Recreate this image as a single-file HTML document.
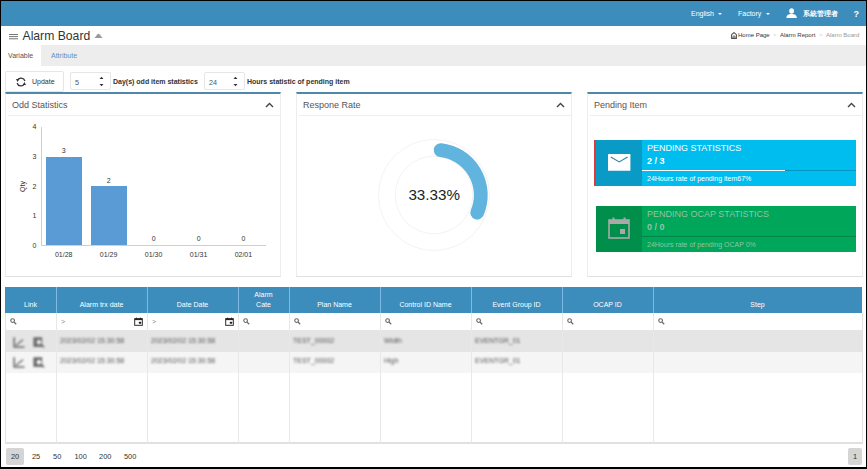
<!DOCTYPE html>
<html><head><meta charset="utf-8">
<style>
*{box-sizing:border-box;margin:0;padding:0}
html,body{width:867px;height:469px;overflow:hidden;background:#fff}
body{font-family:"Liberation Sans",sans-serif;color:#333;position:relative}
.a{position:absolute;white-space:nowrap}
.bk{position:absolute;background:#000;z-index:50}
.nav{color:#fff;font-size:7px;line-height:9px}
.caret{position:absolute;width:0;height:0;border-left:2px solid transparent;border-right:2px solid transparent;border-top:2px solid #fff}
.panel{position:absolute;top:92px;width:276px;height:185px;border:1px solid #ededed;border-bottom-color:#e0e0e0;border-top:2px solid #4f88ab;background:#fff}
.ptitle{position:absolute;left:6px;top:5.8px;font-size:9px;color:#555;line-height:11px}
.psep{position:absolute;left:2px;top:21px;width:272px;height:1px;background:#efefef}
.chev{position:absolute;top:8px;right:6px}
.inp{position:absolute;border:1px solid #e6e6e6;border-radius:2px;background:#fff}
.bold7{font-size:7px;font-weight:bold;color:#333;line-height:9px}
.lbl{font-size:7px;line-height:9px;color:#333}
.th{text-align:center;color:#fff;font-size:7px;line-height:9.5px}
.td{font-size:7px;line-height:9px;color:#555;filter:blur(0.8px)}
.blur{filter:blur(0.8px)}
</style></head><body>
<div class="a" style="left:0;top:0;width:867px;height:26px;background:#3c8dbc"></div>
<div class="a nav" style="left:691px;top:9px">English</div>
<div class="caret" style="left:717.5px;top:12.8px"></div>
<div class="a nav" style="left:738px;top:9px">Factory</div>
<div class="caret" style="left:765.5px;top:12.8px"></div>
<svg class="a" style="left:786px;top:8px" width="11" height="11" viewBox="0 0 11 11"><ellipse cx="5.6" cy="2.9" rx="2.4" ry="2.75" fill="#fff"/><path d="M0.4 10.1 C0.4 6.9 2.6 6 5.6 6 C8.6 6 10.8 6.9 10.8 10.1Z" fill="#fff"/></svg>
<div class="a nav" style="left:803px;top:9px;font-size:6.7px;font-weight:bold">系統管理者</div>
<div class="a nav" style="left:853.5px;top:8.5px;font-weight:bold;font-size:9px;line-height:10px">?</div>
<svg class="a" style="left:9px;top:33px" width="9" height="7" viewBox="0 0 9 7"><rect x="0" y="1" width="9" height="1" fill="#777"/><rect x="0" y="3.1" width="9" height="1" fill="#777"/><rect x="0" y="5.3" width="9" height="1" fill="#777"/></svg>
<div class="a" style="left:22.5px;top:28.7px;font-size:12.2px;line-height:14px;color:#333">Alarm Board</div>
<svg class="a" style="left:94px;top:33px" width="9" height="6" viewBox="0 0 9 6"><path d="M0.5 5 L3.6 1.2 Q4.5 0.2 5.4 1.2 L8.5 5 Z" fill="#999"/></svg>
<svg class="a" style="left:730.5px;top:32px" width="6" height="7" viewBox="0 0 6 7"><path d="M0.6 2.7 L3 0.6 L5.4 2.7 V6.4 H0.6 Z" fill="none" stroke="#555" stroke-width="1.1"/><path d="M2.1 6.4 V4.7 A0.9 0.9 0 0 1 3.9 4.7 V6.4" fill="none" stroke="#555" stroke-width="0.9"/></svg>
<div class="a" style="left:738px;font-size:6px;line-height:8px;top:31.2px;color:#333">Home Page</div>
<div class="a" style="left:773px;font-size:6px;line-height:8px;top:31.2px;color:#ccc">&gt;</div>
<div class="a" style="left:780px;font-size:6px;line-height:8px;top:31.2px;color:#333">Alarm Report</div>
<div class="a" style="left:819px;font-size:6px;line-height:8px;top:31.2px;color:#ccc">&gt;</div>
<div class="a" style="left:826px;font-size:6px;line-height:8px;top:31.2px;color:#999">Alarm Board</div>
<div class="a" style="left:0;top:45px;width:867px;height:21px;background:#ededed"></div>
<div class="a" style="left:1px;top:45px;width:40px;height:21px;background:#fff"></div>
<div class="a" style="left:8px;top:51px;font-size:7px;line-height:9px;color:#555">Variable</div>
<div class="a" style="left:51px;top:51px;font-size:7px;line-height:9px;color:#5a8fc6">Attribute</div>
<div class="inp" style="left:5px;top:71px;width:59px;height:21px"></div>
<svg class="a" style="left:15.5px;top:76.5px" width="10" height="10" viewBox="0 0 10 10"><path d="M1.6 3.0 A4 4 0 0 1 8.9 4.0" fill="none" stroke="#333" stroke-width="1.25"/><path d="M0.0 1.9 L3.4 1.9 L1.5 5.0 Z" fill="#333"/><path d="M8.4 7.0 A4 4 0 0 1 1.1 6.0" fill="none" stroke="#333" stroke-width="1.25"/><path d="M10.0 8.1 L6.6 8.1 L8.5 5.0 Z" fill="#333"/></svg>
<div class="a" style="left:32px;top:77px;font-size:7px;line-height:9px;color:#333">Update</div>
<div class="inp" style="left:70px;top:72px;width:41px;height:18px"></div>
<div class="a" style="left:75px;top:77.7px;font-size:7.2px;line-height:9px;color:#555">5</div>
<svg class="a" style="left:99px;top:76px" width="5" height="11" viewBox="0 0 5 11"><path d="M0.5 3 L2.5 0.8 L4.5 3Z M0.5 8 L2.5 10.2 L4.5 8Z" fill="#333"/></svg>
<div class="a bold7" style="left:113px;top:77px">Day(s) odd item statistics</div>
<div class="inp" style="left:204px;top:72px;width:41px;height:18px"></div>
<div class="a" style="left:209px;top:77.7px;font-size:7.2px;line-height:9px;color:#555">24</div>
<svg class="a" style="left:233px;top:76px" width="5" height="11" viewBox="0 0 5 11"><path d="M0.5 3 L2.5 0.8 L4.5 3Z M0.5 8 L2.5 10.2 L4.5 8Z" fill="#333"/></svg>
<div class="a bold7" style="left:247px;top:77px">Hours statistic of pending item</div>
<div class="panel" style="left:5px"><div class="ptitle">Odd Statistics</div><svg class="chev" width="9" height="6" viewBox="0 0 9 6"><path d="M1 5 L4.5 1.5 L8 5" fill="none" stroke="#444" stroke-width="1.4"/></svg><div class="psep"></div></div>
<div class="panel" style="left:296px"><div class="ptitle">Respone Rate</div><svg class="chev" width="9" height="6" viewBox="0 0 9 6"><path d="M1 5 L4.5 1.5 L8 5" fill="none" stroke="#444" stroke-width="1.4"/></svg><div class="psep"></div></div>
<div class="panel" style="left:587px"><div class="ptitle">Pending Item</div><svg class="chev" width="9" height="6" viewBox="0 0 9 6"><path d="M1 5 L4.5 1.5 L8 5" fill="none" stroke="#444" stroke-width="1.4"/></svg><div class="psep"></div></div>
<div class="a" style="left:41px;top:127px;width:1px;height:119px;background:#cfcfcf"></div>
<div class="a" style="left:41px;top:245px;width:225px;height:1px;background:#cfcfcf"></div>
<div class="a lbl" style="right:830.5px;top:122.3px">4</div>
<div class="a lbl" style="right:830.5px;top:151.9px">3</div>
<div class="a lbl" style="right:830.5px;top:181.60000000000002px">2</div>
<div class="a lbl" style="right:830.5px;top:211.3px">1</div>
<div class="a lbl" style="right:830.5px;top:240.8px">0</div>
<div class="a lbl" style="left:17px;top:181.5px;width:11px;text-align:center;transform:rotate(-90deg)">Qty</div>
<div class="a" style="left:45.6px;top:157px;width:36px;height:88px;background:#5b9bd5"></div>
<div class="a" style="left:90.5px;top:186.3px;width:36px;height:58.7px;background:#5b9bd5"></div>
<div class="a lbl" style="left:43.7px;width:40px;text-align:center;top:145.7px">3</div>
<div class="a lbl" style="left:43.7px;width:40px;text-align:center;top:249.9px">01/28</div>
<div class="a lbl" style="left:88.6px;width:40px;text-align:center;top:175.5px">2</div>
<div class="a lbl" style="left:88.6px;width:40px;text-align:center;top:249.9px">01/29</div>
<div class="a lbl" style="left:133.6px;width:40px;text-align:center;top:234.3px">0</div>
<div class="a lbl" style="left:133.6px;width:40px;text-align:center;top:249.9px">01/30</div>
<div class="a lbl" style="left:178.6px;width:40px;text-align:center;top:234.3px">0</div>
<div class="a lbl" style="left:178.6px;width:40px;text-align:center;top:249.9px">01/31</div>
<div class="a lbl" style="left:223.4px;width:40px;text-align:center;top:234.3px">0</div>
<div class="a lbl" style="left:223.4px;width:40px;text-align:center;top:249.9px">02/01</div>
<svg class="a" style="left:374.2px;top:135.3px" width="120" height="120" viewBox="-60 -60 120 120">
<circle cx="0" cy="0" r="55.5" fill="none" stroke="#f3f3f3" stroke-width="1"/>
<circle cx="0" cy="0" r="38.8" fill="none" stroke="#f3f3f3" stroke-width="1"/>
<path d="M6.63 -44.91 A45.3 45.3 0 0 1 43.26 17.65" fill="none" stroke="#60b4de" stroke-width="13.8" stroke-linecap="round"/>
</svg>
<div class="a" style="left:394.2px;width:80px;text-align:center;top:185.8px;font-size:15.2px;line-height:17px;color:#222">33.33%</div>
<div class="a" style="left:594px;top:140px;width:2px;height:46px;background:#dd3c3c"></div>
<div class="a" style="left:596px;top:140px;width:46px;height:46px;background:#0a9ac6"></div>
<div class="a" style="left:642px;top:140px;width:214px;height:46px;background:#00bdf0"></div>
<svg class="a" style="left:608px;top:154px" width="23" height="17" viewBox="0 0 23 17"><rect x="0" y="0" width="22.4" height="16.8" rx="0.6" fill="#fff"/><path d="M2.8 3 L11.2 7.9 L19.6 3" fill="none" stroke="#2b86a6" stroke-width="1.2"/></svg>
<div class="a" style="left:647px;top:144px;font-size:9px;line-height:9px;color:#fff">PENDING STATISTICS</div>
<div class="a" style="left:647px;top:156.8px;font-size:9px;line-height:9px;color:#fff;font-weight:bold">2 / 3</div>
<div class="a" style="left:642px;top:169.7px;width:214px;height:1.5px;background:rgba(0,0,0,0.2)"></div>
<div class="a" style="left:642px;top:169.7px;width:143px;height:1.5px;background:#fff"></div>
<div class="a" style="left:647px;top:174.8px;font-size:7px;line-height:7px;color:#fff">24Hours rate of pending item67%</div>
<div class="a" style="left:596px;top:206px;width:46px;height:46px;background:#008f4a"></div>
<div class="a" style="left:642px;top:206px;width:214px;height:46px;background:#00a65a"></div>
<svg class="a" style="left:608px;top:217px" width="22" height="22" viewBox="0 0 22 22"><rect x="1" y="3" width="20" height="18" fill="none" stroke="#a9a9a9" stroke-width="1.6"/><rect x="1" y="3" width="20" height="4" fill="#a9a9a9"/><rect x="4.5" y="0.5" width="2" height="3" fill="#a9a9a9"/><rect x="15.5" y="0.5" width="2" height="3" fill="#a9a9a9"/><rect x="12" y="12" width="5" height="5" fill="#a9a9a9"/></svg>
<div class="a" style="left:647px;top:210px;font-size:9px;line-height:9px;color:#92c4a4">PENDING OCAP STATISTICS</div>
<div class="a" style="left:647px;top:222.8px;font-size:9px;line-height:9px;color:#92c4a4;font-weight:bold">0 / 0</div>
<div class="a" style="left:642px;top:235.7px;width:214px;height:1.5px;background:rgba(0,0,0,0.2)"></div>
<div class="a" style="left:647px;top:240.8px;font-size:7px;line-height:7px;color:#92c4a4">24Hours rate of pending OCAP 0%</div>
<div class="a" style="left:5px;top:287px;width:857px;height:26px;background:#3c8dbc"></div>
<div class="a" style="left:5px;top:330px;width:857px;height:22px;background:#e5e5e5"></div>
<div class="a" style="left:5px;top:352px;width:857px;height:21px;background:#f5f5f5"></div>
<div class="a" style="left:5px;top:313px;width:1px;height:130px;background:#e3e3e3"></div>
<div class="a" style="left:862px;top:313px;width:1px;height:130px;background:#e3e3e3"></div>
<div class="a" style="left:5px;top:442px;width:858px;height:1.5px;background:#e0e0e0"></div>
<div class="a" style="left:56px;top:287px;width:1px;height:26px;background:#7fbae6"></div>
<div class="a" style="left:56px;top:313px;width:1px;height:130px;background:#e8e8e8"></div>
<div class="a" style="left:147px;top:287px;width:1px;height:26px;background:#7fbae6"></div>
<div class="a" style="left:147px;top:313px;width:1px;height:130px;background:#e8e8e8"></div>
<div class="a" style="left:238px;top:287px;width:1px;height:26px;background:#7fbae6"></div>
<div class="a" style="left:238px;top:313px;width:1px;height:130px;background:#e8e8e8"></div>
<div class="a" style="left:289px;top:287px;width:1px;height:26px;background:#7fbae6"></div>
<div class="a" style="left:289px;top:313px;width:1px;height:130px;background:#e8e8e8"></div>
<div class="a" style="left:380px;top:287px;width:1px;height:26px;background:#7fbae6"></div>
<div class="a" style="left:380px;top:313px;width:1px;height:130px;background:#e8e8e8"></div>
<div class="a" style="left:471px;top:287px;width:1px;height:26px;background:#7fbae6"></div>
<div class="a" style="left:471px;top:313px;width:1px;height:130px;background:#e8e8e8"></div>
<div class="a" style="left:562px;top:287px;width:1px;height:26px;background:#7fbae6"></div>
<div class="a" style="left:562px;top:313px;width:1px;height:130px;background:#e8e8e8"></div>
<div class="a" style="left:653px;top:287px;width:1px;height:26px;background:#7fbae6"></div>
<div class="a" style="left:653px;top:313px;width:1px;height:130px;background:#e8e8e8"></div>
<div class="a th" style="left:5px;width:51px;bottom:160px">Link</div>
<div class="a th" style="left:56px;width:91px;bottom:160px">Alarm trx date</div>
<div class="a th" style="left:147px;width:91px;bottom:160px">Date Date</div>
<div class="a th" style="left:238px;width:51px;bottom:160px">Alarm<br>Cate</div>
<div class="a th" style="left:289px;width:91px;bottom:160px">Plan Name</div>
<div class="a th" style="left:380px;width:91px;bottom:160px">Control ID Name</div>
<div class="a th" style="left:471px;width:91px;bottom:160px">Event Group ID</div>
<div class="a th" style="left:562px;width:91px;bottom:160px">OCAP ID</div>
<div class="a th" style="left:653px;width:209px;bottom:160px">Step</div>
<div class="a" style="left:10px;top:318.2px;line-height:0"><svg width="7" height="7" viewBox="0 0 7 7"><circle cx="2.6" cy="2.6" r="1.85" fill="none" stroke="#666" stroke-width="1.1"/><path d="M3.9 3.9 L6.2 6.2" stroke="#666" stroke-width="1.3"/></svg></div>
<div class="a" style="left:61px;top:317.5px;font-size:7px;line-height:7px;color:#888">&gt;</div>
<div class="a" style="left:134.2px;top:317.1px;line-height:0"><svg width="9" height="9" viewBox="0 0 9 9"><rect x="0.7" y="1.7" width="7.6" height="6.6" fill="none" stroke="#222" stroke-width="0.95"/><rect x="0.7" y="1.5" width="7.6" height="1.6" fill="#222"/><rect x="2" y="0.7" width="1" height="1.2" fill="#222"/><rect x="6" y="0.7" width="1" height="1.2" fill="#222"/><rect x="4.9" y="4.7" width="2.2" height="2" rx="0.5" fill="#222"/></svg></div>
<div class="a" style="left:152px;top:317.5px;font-size:7px;line-height:7px;color:#888">&gt;</div>
<div class="a" style="left:225.2px;top:317.1px;line-height:0"><svg width="9" height="9" viewBox="0 0 9 9"><rect x="0.7" y="1.7" width="7.6" height="6.6" fill="none" stroke="#222" stroke-width="0.95"/><rect x="0.7" y="1.5" width="7.6" height="1.6" fill="#222"/><rect x="2" y="0.7" width="1" height="1.2" fill="#222"/><rect x="6" y="0.7" width="1" height="1.2" fill="#222"/><rect x="4.9" y="4.7" width="2.2" height="2" rx="0.5" fill="#222"/></svg></div>
<div class="a" style="left:243px;top:318.2px;line-height:0"><svg width="7" height="7" viewBox="0 0 7 7"><circle cx="2.6" cy="2.6" r="1.85" fill="none" stroke="#666" stroke-width="1.1"/><path d="M3.9 3.9 L6.2 6.2" stroke="#666" stroke-width="1.3"/></svg></div>
<div class="a" style="left:294px;top:318.2px;line-height:0"><svg width="7" height="7" viewBox="0 0 7 7"><circle cx="2.6" cy="2.6" r="1.85" fill="none" stroke="#666" stroke-width="1.1"/><path d="M3.9 3.9 L6.2 6.2" stroke="#666" stroke-width="1.3"/></svg></div>
<div class="a" style="left:385px;top:318.2px;line-height:0"><svg width="7" height="7" viewBox="0 0 7 7"><circle cx="2.6" cy="2.6" r="1.85" fill="none" stroke="#666" stroke-width="1.1"/><path d="M3.9 3.9 L6.2 6.2" stroke="#666" stroke-width="1.3"/></svg></div>
<div class="a" style="left:476px;top:318.2px;line-height:0"><svg width="7" height="7" viewBox="0 0 7 7"><circle cx="2.6" cy="2.6" r="1.85" fill="none" stroke="#666" stroke-width="1.1"/><path d="M3.9 3.9 L6.2 6.2" stroke="#666" stroke-width="1.3"/></svg></div>
<div class="a" style="left:567px;top:318.2px;line-height:0"><svg width="7" height="7" viewBox="0 0 7 7"><circle cx="2.6" cy="2.6" r="1.85" fill="none" stroke="#666" stroke-width="1.1"/><path d="M3.9 3.9 L6.2 6.2" stroke="#666" stroke-width="1.3"/></svg></div>
<div class="a" style="left:658px;top:318.2px;line-height:0"><svg width="7" height="7" viewBox="0 0 7 7"><circle cx="2.6" cy="2.6" r="1.85" fill="none" stroke="#666" stroke-width="1.1"/><path d="M3.9 3.9 L6.2 6.2" stroke="#666" stroke-width="1.3"/></svg></div>
<div class="a blur" style="left:13.1px;top:336.7px;line-height:0"><svg width="12" height="11" viewBox="0 0 12 11"><path d="M1.2 0.3 V10 H11.5" fill="none" stroke="#6a6a6a" stroke-width="1.6"/><path d="M2.8 8.6 L10 2.6" fill="none" stroke="#7a7a7a" stroke-width="1.4"/></svg></div>
<div class="a blur" style="left:32.7px;top:336.7px;line-height:0"><svg width="12" height="11" viewBox="0 0 12 11"><rect x="0.4" y="0.3" width="8.8" height="9.6" fill="#6a6a6a"/><circle cx="6" cy="5.2" r="2.4" fill="#e5e5e5"/><path d="M7.6 7 L11 10.4" stroke="#6a6a6a" stroke-width="1.6"/></svg></div>
<div class="a td" style="left:60px;top:336.0px">2023/02/02 15:30:58</div>
<div class="a td" style="left:151px;top:336.0px">2023/02/02 15:30:58</div>
<div class="a td" style="left:293px;top:336.0px">TEST_00002</div>
<div class="a td" style="left:384px;top:336.0px">Width</div>
<div class="a td" style="left:475px;top:336.0px">EVENTGR_01</div>
<div class="a blur" style="left:13.1px;top:356.7px;line-height:0"><svg width="12" height="11" viewBox="0 0 12 11"><path d="M1.2 0.3 V10 H11.5" fill="none" stroke="#6a6a6a" stroke-width="1.6"/><path d="M2.8 8.6 L10 2.6" fill="none" stroke="#7a7a7a" stroke-width="1.4"/></svg></div>
<div class="a blur" style="left:32.7px;top:356.7px;line-height:0"><svg width="12" height="11" viewBox="0 0 12 11"><rect x="0.4" y="0.3" width="8.8" height="9.6" fill="#6a6a6a"/><circle cx="6" cy="5.2" r="2.4" fill="#f5f5f5"/><path d="M7.6 7 L11 10.4" stroke="#6a6a6a" stroke-width="1.6"/></svg></div>
<div class="a td" style="left:60px;top:356.0px">2023/02/02 15:30:58</div>
<div class="a td" style="left:151px;top:356.0px">2023/02/02 15:30:58</div>
<div class="a td" style="left:293px;top:356.0px">TEST_00002</div>
<div class="a td" style="left:384px;top:356.0px">High</div>
<div class="a td" style="left:475px;top:356.0px">EVENTGR_01</div>
<div class="a" style="left:6px;top:448px;width:18px;height:17px;background:#d5d5d5;border-radius:2px"></div>
<div class="a lbl" style="left:0px;width:30px;text-align:center;top:451.7px;color:#333;font-size:7.4px">20</div>
<div class="a lbl" style="left:21px;width:30px;text-align:center;top:451.7px;color:#333;font-size:7.4px">25</div>
<div class="a lbl" style="left:42.2px;width:30px;text-align:center;top:451.7px;color:#333;font-size:7.4px">50</div>
<div class="a lbl" style="left:65.6px;width:30px;text-align:center;top:451.7px;color:#333;font-size:7.4px">100</div>
<div class="a lbl" style="left:90.2px;width:30px;text-align:center;top:451.7px;color:#333;font-size:7.4px">200</div>
<div class="a lbl" style="left:115.1px;width:30px;text-align:center;top:451.7px;color:#333;font-size:7.4px">500</div>
<div class="a" style="left:848px;top:448px;width:14px;height:17px;background:#d5d5d5;border-radius:2px"></div>
<div class="a lbl" style="left:848px;width:14px;text-align:center;top:451.7px;color:#333;font-size:7.4px">1</div>
<div class="bk" style="left:0;top:0;width:867px;height:1px"></div>
<div class="bk" style="left:0;top:0;width:1px;height:469px"></div>
<div class="bk" style="left:866px;top:0;width:1px;height:469px"></div>
<div class="bk" style="left:0;top:467px;width:867px;height:2px"></div>
</body></html>
